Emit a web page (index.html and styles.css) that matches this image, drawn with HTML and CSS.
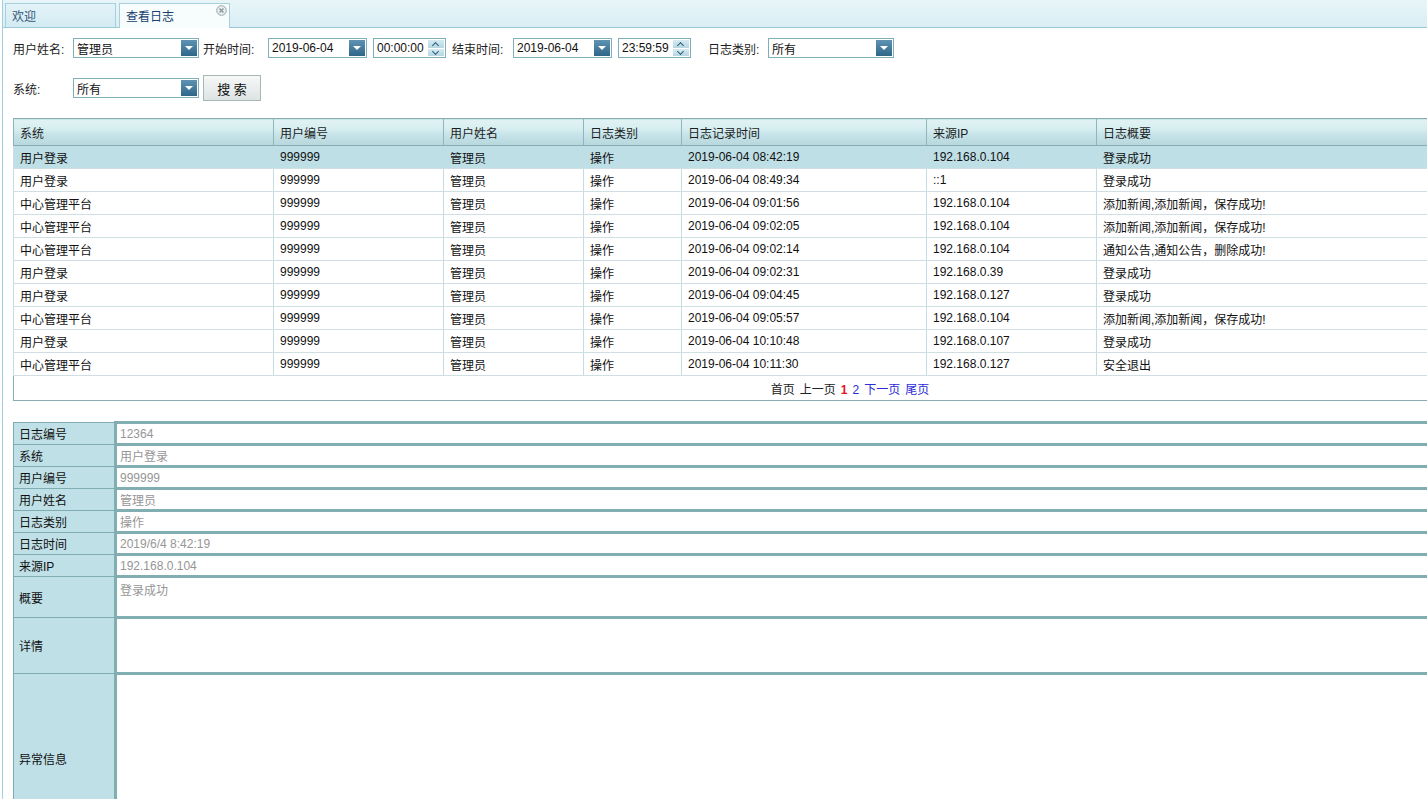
FILE: index.html
```html
<!DOCTYPE html>
<html lang="zh-CN">
<head>
<meta charset="utf-8">
<title>查看日志</title>
<link rel="stylesheet" href="styles.css">
</head>
<body>
<div class="frame">
  <div class="tabbar">
    <div class="tab">欢迎</div>
    <div class="tab active">查看日志
      <span class="tab-close"><svg width="11" height="11" viewBox="0 0 11 11"><circle cx="5.5" cy="5.5" r="4.8" fill="#e9eef0" stroke="#9aa5aa"/><path d="M3.5 3.5l4 4M7.5 3.5l-4 4" stroke="#8c979c" stroke-width="1.4"/></svg></span>
    </div>
  </div>
  <div class="content">
    <div class="filters">
      <div class="frow">
        <span class="lbl l1">用户姓名:</span>
        <div class="combo w126"><span class="cval">管理员</span><span class="arrow"></span></div>
        <span class="lbl l2">开始时间:</span>
        <div class="combo w99"><span class="cval">2019-06-04</span><span class="arrow"></span></div>
        <div class="spin"><span class="cval">00:00:00</span><span class="spinbtns"><span class="sb up"></span><span class="sb down"></span></span></div>
        <span class="lbl l3">结束时间:</span>
        <div class="combo w99"><span class="cval">2019-06-04</span><span class="arrow"></span></div>
        <div class="spin"><span class="cval">23:59:59</span><span class="spinbtns"><span class="sb up"></span><span class="sb down"></span></span></div>
        <span class="lbl l4">日志类别:</span>
        <div class="combo w126"><span class="cval">所有</span><span class="arrow"></span></div>
      </div>
      <div class="frow row2">
        <span class="lbl l1">系统:</span>
        <div class="combo w126"><span class="cval">所有</span><span class="arrow"></span></div>
        <button class="btn">搜 索</button>
      </div>
    </div>

    <table class="grid">
      <colgroup>
        <col class="c1"><col class="c2"><col class="c3"><col class="c4"><col class="c5"><col class="c6"><col>
      </colgroup>
      <thead>
        <tr><th>系统</th><th>用户编号</th><th>用户姓名</th><th>日志类别</th><th>日志记录时间</th><th>来源IP</th><th>日志概要</th></tr>
      </thead>
      <tbody>
        <tr class="sel"><td>用户登录</td><td>999999</td><td>管理员</td><td>操作</td><td>2019-06-04 08:42:19</td><td>192.168.0.104</td><td>登录成功</td></tr>
        <tr><td>用户登录</td><td>999999</td><td>管理员</td><td>操作</td><td>2019-06-04 08:49:34</td><td>::1</td><td>登录成功</td></tr>
        <tr><td>中心管理平台</td><td>999999</td><td>管理员</td><td>操作</td><td>2019-06-04 09:01:56</td><td>192.168.0.104</td><td>添加新闻,添加新闻，保存成功!</td></tr>
        <tr><td>中心管理平台</td><td>999999</td><td>管理员</td><td>操作</td><td>2019-06-04 09:02:05</td><td>192.168.0.104</td><td>添加新闻,添加新闻，保存成功!</td></tr>
        <tr><td>中心管理平台</td><td>999999</td><td>管理员</td><td>操作</td><td>2019-06-04 09:02:14</td><td>192.168.0.104</td><td>通知公告,通知公告，删除成功!</td></tr>
        <tr><td>用户登录</td><td>999999</td><td>管理员</td><td>操作</td><td>2019-06-04 09:02:31</td><td>192.168.0.39</td><td>登录成功</td></tr>
        <tr><td>用户登录</td><td>999999</td><td>管理员</td><td>操作</td><td>2019-06-04 09:04:45</td><td>192.168.0.127</td><td>登录成功</td></tr>
        <tr><td>中心管理平台</td><td>999999</td><td>管理员</td><td>操作</td><td>2019-06-04 09:05:57</td><td>192.168.0.104</td><td>添加新闻,添加新闻，保存成功!</td></tr>
        <tr><td>用户登录</td><td>999999</td><td>管理员</td><td>操作</td><td>2019-06-04 10:10:48</td><td>192.168.0.107</td><td>登录成功</td></tr>
        <tr><td>中心管理平台</td><td>999999</td><td>管理员</td><td>操作</td><td>2019-06-04 10:11:30</td><td>192.168.0.127</td><td>安全退出</td></tr>
      </tbody>
      <tfoot>
        <tr><td colspan="7" class="pager"><span class="pg">首页</span><span class="pg">上一页</span><span class="cur">1</span><span class="lnk">2</span><span class="lnk">下一页</span><span class="lnk">尾页</span></td></tr>
      </tfoot>
    </table>

    <table class="detail">
      <tr><td class="dl">日志编号</td><td class="dv">12364</td></tr>
      <tr><td class="dl">系统</td><td class="dv">用户登录</td></tr>
      <tr><td class="dl">用户编号</td><td class="dv">999999</td></tr>
      <tr><td class="dl">用户姓名</td><td class="dv">管理员</td></tr>
      <tr><td class="dl">日志类别</td><td class="dv">操作</td></tr>
      <tr><td class="dl">日志时间</td><td class="dv">2019/6/4 8:42:19</td></tr>
      <tr><td class="dl">来源IP</td><td class="dv">192.168.0.104</td></tr>
      <tr class="r-sum"><td class="dl">概要</td><td class="dv top">登录成功</td></tr>
      <tr class="r-det"><td class="dl">详情</td><td class="dv top"></td></tr>
      <tr class="r-err"><td class="dl">异常信息</td><td class="dv top"></td></tr>
    </table>
  </div>
</div>
</body>
</html>
```

FILE: styles.css
```css
html, body {
  margin: 0;
  padding: 0;
  background: #ffffff;
  overflow: hidden;
}
body {
  font-family: "Liberation Sans", "Noto Sans CJK SC", sans-serif;
  font-size: 12px;
  color: #000;
}
.frame {
  margin-left: 2px;
  border-left: 1px solid #9fd0e2;
  height: 799px;
  overflow: hidden;
}
.tabbar {
  display: flex;
  align-items: flex-end;
  height: 28px;
  padding-left: 2px;
  gap: 3px;
  background: linear-gradient(#e8f5f9, #d9eef5);
  border-bottom: 1px solid #9cc9d6;
  box-sizing: border-box;
}
.tab {
  position: relative;
  width: 111px;
  height: 24px;
  box-sizing: border-box;
  border: 1px solid #a7d0dc;
  border-bottom: none;
  background: linear-gradient(#e3f3f8, #d3ebf3);
  color: #35577a;
  padding: 6px 0 0 6px;
  font-size: 12px;
  line-height: 14px;
}
.tab.active {
  background: #f7fcfd;
  color: #183f6e;
  height: 25px;
  margin-bottom: -1px;
}
.tab-close {
  position: absolute;
  right: 2px;
  top: 1px;
  width: 11px;
  height: 11px;
  display: block;
}
.tab-close svg { display: block; }
.content {
  padding: 10px 0 0 10px;
}
.filters {
  display: flex;
  flex-direction: column;
}
.frow {
  display: flex;
  align-items: center;
  height: 20px;
}
.row2 {
  margin-top: 17px;
  height: 26px;
}
.lbl {
  color: #1d1d1d;
  white-space: nowrap;
  flex: none;
}
.l1 { width: 60px; }
.l2 { margin-left: 4px; width: 65px; }
.l3 { margin-left: 6px; width: 61px; }
.l4 { margin-left: 17px; width: 60px; }
.combo, .spin {
  display: flex;
  align-items: center;
  flex: none;
  height: 20px;
  box-sizing: border-box;
  border: 1px solid #7fb0ba;
  background: #fff;
  padding: 0 1px 0 3px;
}
.w126 { width: 126px; }
.w99 { width: 99px; }
.spin { width: 73px; margin-left: 6px; }
.cval {
  flex: 1;
  color: #111;
  white-space: nowrap;
  overflow: hidden;
}
.arrow {
  width: 16px;
  height: 16px;
  background: linear-gradient(#5f93b3, #2e6688);
  position: relative;
}
.arrow::after {
  content: "";
  position: absolute;
  left: 4px;
  top: 6px;
  border-left: 4px solid transparent;
  border-right: 4px solid transparent;
  border-top: 4px solid #ffffff;
}
.spinbtns {
  display: flex;
  flex-direction: column;
  width: 16px;
  height: 16px;
  gap: 1px;
}
.sb {
  flex: 1;
  background: linear-gradient(#d6ebf2, #b5d6e2);
  position: relative;
}
.sb::after {
  content: "";
  position: absolute;
  left: 5px;
  width: 4px;
  height: 4px;
  border-left: 1.5px solid #2b5d77;
  border-top: 1.5px solid #2b5d77;
}
.sb.up::after { top: 3px; transform: rotate(45deg); }
.sb.down::after { top: 0px; transform: rotate(225deg); }
.btn {
  margin-left: 4px;
  width: 58px;
  height: 26px;
  border: 1px solid #a8b7b8;
  background: linear-gradient(#f7f8f8, #dce3e3);
  font-family: "Liberation Sans", "Noto Sans CJK SC", sans-serif;
  font-size: 13px;
  color: #111;
  padding: 0;
}
.grid {
  margin-top: 17px;
  width: 1674px;
  border-collapse: collapse;
  border: 1px solid #88adb3;
  table-layout: fixed;
}
.grid col.c1 { width: 260px; }
.grid col.c2 { width: 170px; }
.grid col.c3 { width: 140px; }
.grid col.c4 { width: 98px; }
.grid col.c5 { width: 245px; }
.grid col.c6 { width: 170px; }
.grid th {
  height: 26px;
  padding: 0 6px;
  text-align: left;
  font-weight: normal;
  color: #1d1d1d;
  background: linear-gradient(#e1f2f4 0%, #d7eef1 35%, #c5e3e8 60%, #b7d7dc 100%);
  border-left: 1px solid #8fb4ba;
  border-bottom: 1px solid #88adb3;
}
.grid td {
  height: 22px;
  padding: 0 6px;
  border-left: 1px solid #c6dce2;
  border-bottom: 1px solid #cfdfe3;
  white-space: nowrap;
  color: #111;
}
.grid tr.sel td { background: #bfdfe6; }
.grid td.pager {
  height: 24px;
  text-align: center;
  border-bottom: 1px solid #88adb3;
  border-left: none;
  padding: 0;
}
.pager span { margin: 0 2.5px; }
.pg { color: #222; }
.cur { color: #e0141e; font-weight: bold; }
.lnk { color: #2b2bd8; }
.detail {
  margin-top: 20px;
  width: 1500px;
  border-collapse: collapse;
  table-layout: fixed;
}
.detail td.dl {
  width: 95px;
  padding: 0 0 0 5px;
  background: #c0e0e7;
  border: 1px solid #80adb1;
  color: #111;
  height: 21px;
}
.detail td.dv {
  padding: 0 0 0 3px;
  background: #fff;
  border-top: 3px solid #80aeb1;
  border-left: 3px solid #80aeb1;
  color: #969696;
}
.detail td.top { vertical-align: top; padding-top: 3px; }
.r-sum td.dl { height: 40px; }
.r-det td.dl { height: 55px; }
.r-err td.dl { height: 169px; }
```
